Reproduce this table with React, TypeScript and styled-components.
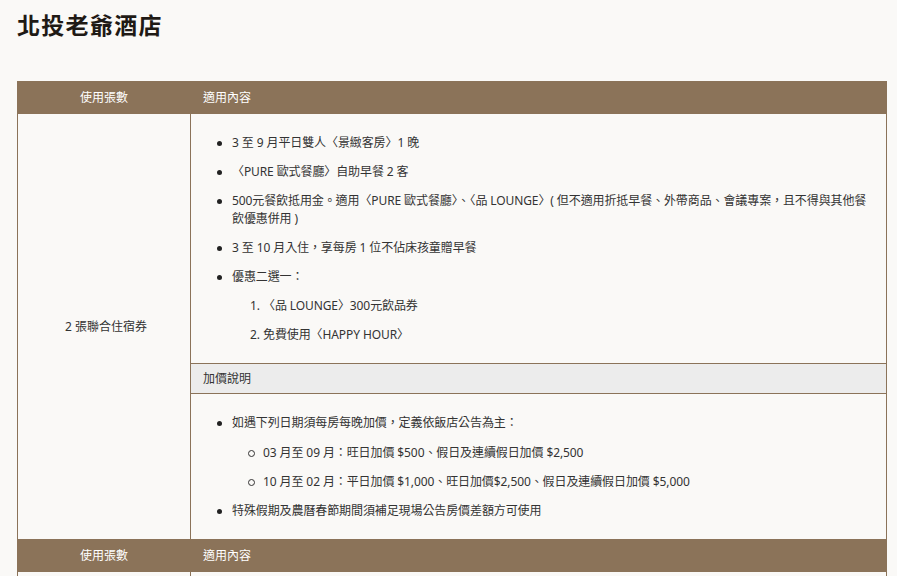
import React from "react";
import styled, { createGlobalStyle } from "styled-components";

const Global = createGlobalStyle`
  html, body { margin: 0; padding: 0; }
  body {
    background: #faf9f7;
    font-family: "Noto Sans", "Noto Sans CJK TC", sans-serif;
    color: #333;
  }
`;

const Page = styled.div`
  padding: 9px 10px 0 17px;
`;

const Title = styled.h1`
  margin: 0 0 41px 0;
  font-family: "Noto Sans CJK TC", sans-serif;
  font-weight: 700;
  font-size: 23px;
  line-height: 31px;
  letter-spacing: 1.3px;
  color: #1f1a15;
`;

const Table = styled.table`
  width: 870px;
  border-collapse: collapse;
  font-family: "Noto Sans", "Noto Sans CJK TC", sans-serif;
  font-size: 12px;
  line-height: 18px;
  color: #333;
`;

const Th = styled.th<{ $center?: boolean; $w?: number }>`
  background: #8b7359;
  color: #fff;
  font-weight: 400;
  text-align: ${(p) => (p.$center ? "center" : "left")};
  padding: 7px 12px 6px;
  border: 1px solid #8b7359;
  ${(p) => (p.$w ? `width: ${p.$w}px;` : "")}
`;

const Td = styled.td<{ $center?: boolean; $gray?: boolean }>`
  border: 1px solid #8b7359;
  padding: ${(p) => (p.$gray ? "6px 12px 5px" : "10px 8px 9px 12px")};
  text-align: ${(p) => (p.$center ? "center" : "left")};
  vertical-align: middle;
  background: ${(p) => (p.$gray ? "#ececec" : "transparent")};
`;

const List = styled.ul`
  margin: 10px 0;
  padding-left: 29px;
  list-style: none;
  letter-spacing: -0.1px;
  & > li + li { margin-top: 11px; }
`;

const Item = styled.li`
  position: relative;
  &::before {
    content: "";
    position: absolute;
    left: -15px;
    top: 7px;
    width: 5px;
    height: 5px;
    border-radius: 50%;
    background: #222;
  }
`;

const SubOl = styled.ol`
  margin: 11px 0 0 0;
  padding-left: 31px;
  & > li + li { margin-top: 11px; }
`;

const SubUl = styled.ul`
  margin: 12px 0 0 0;
  padding-left: 31px;
  list-style: none;
  & > li + li { margin-top: 11px; }
`;

const SubItem = styled.li`
  position: relative;
  &::before {
    content: "";
    position: absolute;
    left: -15px;
    top: 6px;
    width: 5px;
    height: 5px;
    border-radius: 50%;
    border: 1px solid #333;
  }
`;

const EmptyTd = styled.td`
  border: 1px solid #8b7359;
  height: 20px;
`;

export default function App() {
  return (
    <>
      <Global />
      <Page>
        <Title>北投老爺酒店</Title>
        <Table>
          <tbody>
            <tr>
              <Th $center $w={148}>使用張數</Th>
              <Th>適用內容</Th>
            </tr>
            <tr>
              <Td $center rowSpan={3}>2 張聯合住宿券</Td>
              <Td>
                <List>
                  <Item>3 至 9 月平日雙人〈景緻客房〉1 晚</Item>
                  <Item>〈PURE 歐式餐廳〉自助早餐 2 客</Item>
                  <Item>
                    500元餐飲抵用金。適用〈PURE 歐式餐廳〉、〈品 LOUNGE〉( 但不適用折抵早餐、外帶商品、會議專案，且不得與其他餐飲優惠併用 )
                  </Item>
                  <Item>3 至 10 月入住，享每房 1 位不佔床孩童贈早餐</Item>
                  <Item>
                    優惠二選一：
                    <SubOl>
                      <li>〈品 LOUNGE〉300元飲品券</li>
                      <li>免費使用〈HAPPY HOUR〉</li>
                    </SubOl>
                  </Item>
                </List>
              </Td>
            </tr>
            <tr>
              <Td $gray>加價說明</Td>
            </tr>
            <tr>
              <Td>
                <List>
                  <Item>
                    如遇下列日期須每房每晚加價，定義依飯店公告為主：
                    <SubUl>
                      <SubItem>03 月至 09 月：旺日加價 $500、假日及連續假日加價 $2,500</SubItem>
                      <SubItem>10 月至 02 月：平日加價 $1,000、旺日加價$2,500、假日及連續假日加價 $5,000</SubItem>
                    </SubUl>
                  </Item>
                  <Item>特殊假期及農曆春節期間須補足現場公告房價差額方可使用</Item>
                </List>
              </Td>
            </tr>
            <tr>
              <Th $center>使用張數</Th>
              <Th>適用內容</Th>
            </tr>
            <tr>
              <EmptyTd />
              <EmptyTd />
            </tr>
          </tbody>
        </Table>
      </Page>
    </>
  );
}
